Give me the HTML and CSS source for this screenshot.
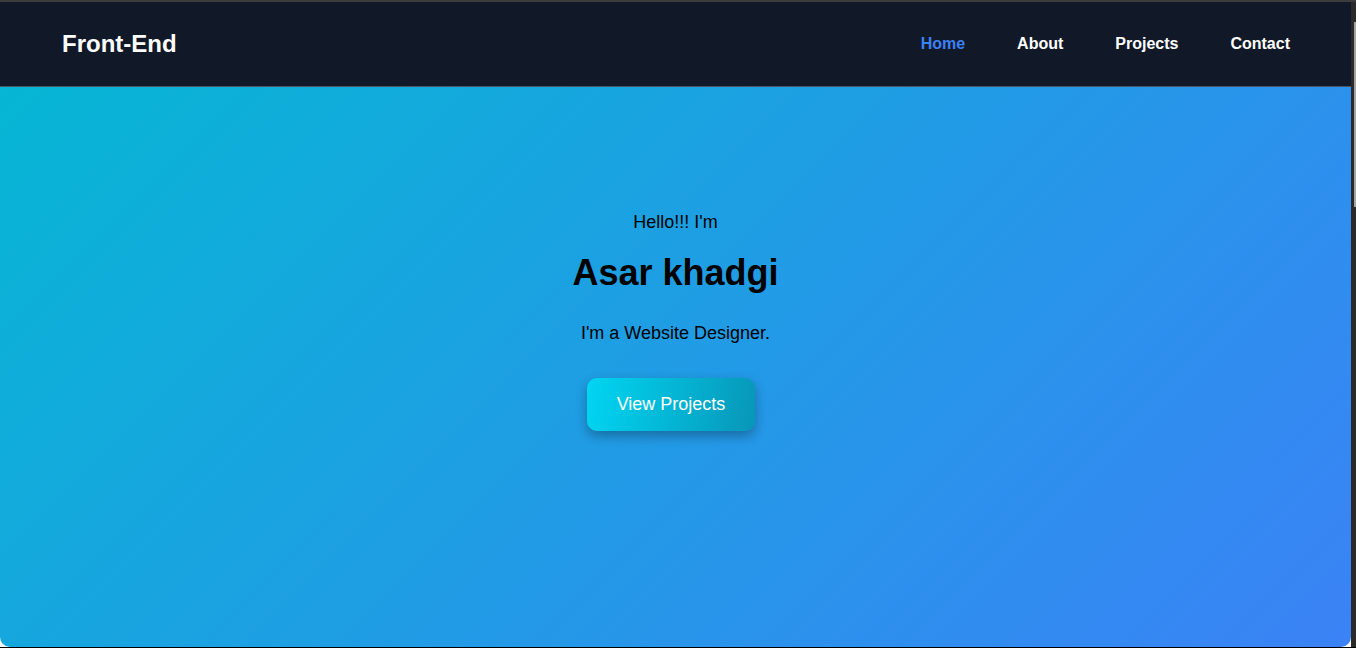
FILE: index.html
```html
<!DOCTYPE html>
<html lang="en">
<head>
<meta charset="utf-8">
<title>Front-End</title>
<link rel="stylesheet" href="styles.css">
</head>
<body>
<div class="window">
  <div class="topbar"></div>
  <div class="frame">
    <div class="page">
      <nav class="nav">
        <div class="logo">Front-End</div>
        <ul class="links">
          <li><a class="link active" href="#">Home</a></li>
          <li><a class="link" href="#">About</a></li>
          <li><a class="link" href="#">Projects</a></li>
          <li><a class="link" href="#">Contact</a></li>
        </ul>
      </nav>
      <section class="hero">
        <p class="hello">Hello!!! I'm</p>
        <h1 class="name">Asar khadgi</h1>
        <p class="role">I'm a Website Designer.</p>
        <a class="btn" href="#">View Projects</a>
      </section>
    </div>
    <div class="scrollbar"><div class="thumb"></div></div>
  </div>
  <div class="bottombar"></div>
</div>
</body>
</html>
```

FILE: styles.css
```css
* { box-sizing: border-box; }
html, body { margin: 0; padding: 0; }
body {
  font-family: "Liberation Sans", Arial, sans-serif;
  background: #ffffff;
  width: 1356px;
  height: 648px;
  overflow: hidden;
}
.window {
  display: flex;
  flex-direction: column;
  height: 648px;
}
.topbar {
  height: 2px;
  background: #3c3c3c;
}
.frame {
  display: flex;
  height: 645px;
}
.page {
  width: 1351px;
  display: flex;
  flex-direction: column;
  background: #ffffff;
}
.nav {
  height: 85px;
  background: #111827;
  border-bottom: 1px solid #4b5563;
  display: flex;
  align-items: center;
  justify-content: space-between;
  padding: 0 61px 0 62px;
}
.logo {
  color: #ffffff;
  font-weight: bold;
  font-size: 24px;
}
.links {
  list-style: none;
  margin: 0;
  padding: 0;
  display: flex;
  gap: 52px;
}
.link {
  color: #ffffff;
  font-weight: bold;
  font-size: 16px;
  text-decoration: none;
}
.link.active { color: #3b82f6; }
.hero {
  height: 560px;
  background: linear-gradient(135deg, #06b6d4 0%, #3b82f6 100%);
  border-radius: 0 0 10px 10px;
  display: flex;
  flex-direction: column;
  align-items: center;
  padding-top: 125px;
  color: #000000;
}
.hello {
  margin: 0;
  font-size: 18px;
}
.name {
  margin: 19px 0 29px;
  font-size: 36px;
  font-weight: bold;
}
.role {
  margin: 0 0 34px;
  font-size: 18px;
}
.btn {
  display: inline-block;
  padding: 16px 29.5px;
  margin-right: 9px;
  border-radius: 10px;
  background: linear-gradient(100deg, #00d6f2 0%, #0896b8 100%);
  color: #ffffff;
  font-size: 18px;
  text-decoration: none;
  box-shadow: 0 5px 12px rgba(0, 0, 0, 0.3);
}
.scrollbar {
  width: 5px;
  background: #2a2a2a;
  display: flex;
  justify-content: flex-end;
  padding-top: 20px;
}
.thumb {
  width: 2px;
  height: 185px;
  background: #a3a3a3;
}
.bottombar {
  height: 1px;
  background: #000000;
}
```
